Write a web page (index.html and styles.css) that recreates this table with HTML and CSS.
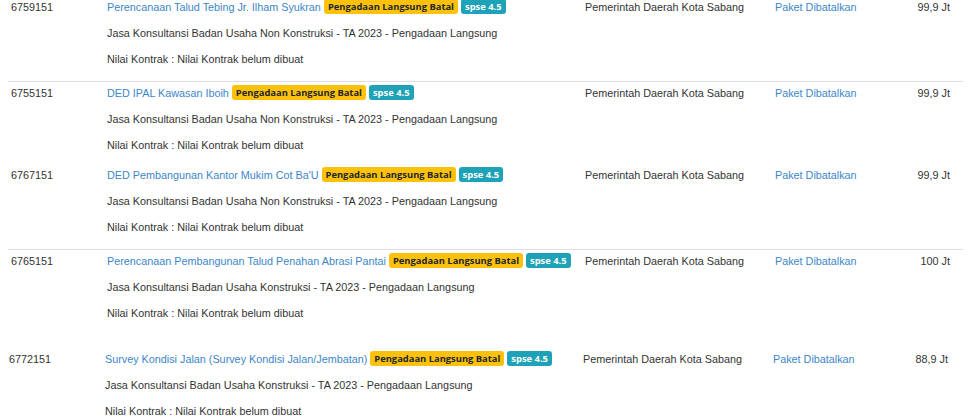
FILE: index.html
```html
<!DOCTYPE html>
<html>
<head>
<meta charset="utf-8">
<link rel="stylesheet" href="styles.css">
</head>
<body>
<div class="list">
  <div class="row row-first row-border">
    <div class="cell"><div class="line">6759151</div></div>
    <div class="cell main">
      <div class="line title"><a class="link">Perencanaan Talud Tebing Jr. Ilham Syukran</a> <span class="badge warn">Pengadaan Langsung Batal</span> <span class="badge info">spse 4.5</span></div>
      <div class="line">Jasa Konsultansi Badan Usaha Non Konstruksi - TA 2023 - Pengadaan Langsung</div>
      <div class="line">Nilai Kontrak : Nilai Kontrak belum dibuat</div>
    </div>
    <div class="cell"><div class="line">Pemerintah Daerah Kota Sabang</div></div>
    <div class="cell"><div class="line"><a class="link">Paket Dibatalkan</a></div></div>
    <div class="cell value"><div class="line">99,9 Jt</div></div>
  </div>

  <div class="row row-short">
    <div class="cell"><div class="line">6755151</div></div>
    <div class="cell main">
      <div class="line title"><a class="link">DED IPAL Kawasan Iboih</a> <span class="badge warn">Pengadaan Langsung Batal</span> <span class="badge info">spse 4.5</span></div>
      <div class="line">Jasa Konsultansi Badan Usaha Non Konstruksi - TA 2023 - Pengadaan Langsung</div>
      <div class="line">Nilai Kontrak : Nilai Kontrak belum dibuat</div>
    </div>
    <div class="cell"><div class="line">Pemerintah Daerah Kota Sabang</div></div>
    <div class="cell"><div class="line"><a class="link">Paket Dibatalkan</a></div></div>
    <div class="cell value"><div class="line">99,9 Jt</div></div>
  </div>

  <div class="row row-border">
    <div class="cell"><div class="line">6767151</div></div>
    <div class="cell main">
      <div class="line title"><a class="link">DED Pembangunan Kantor Mukim Cot Ba'U</a> <span class="badge warn">Pengadaan Langsung Batal</span> <span class="badge info">spse 4.5</span></div>
      <div class="line">Jasa Konsultansi Badan Usaha Non Konstruksi - TA 2023 - Pengadaan Langsung</div>
      <div class="line">Nilai Kontrak : Nilai Kontrak belum dibuat</div>
    </div>
    <div class="cell"><div class="line">Pemerintah Daerah Kota Sabang</div></div>
    <div class="cell"><div class="line"><a class="link">Paket Dibatalkan</a></div></div>
    <div class="cell value"><div class="line">99,9 Jt</div></div>
  </div>

  <div class="row row-tall">
    <div class="cell"><div class="line">6765151</div></div>
    <div class="cell main">
      <div class="line title"><a class="link">Perencanaan Pembangunan Talud Penahan Abrasi Pantai</a> <span class="badge warn">Pengadaan Langsung Batal</span> <span class="badge info">spse 4.5</span></div>
      <div class="line">Jasa Konsultansi Badan Usaha Konstruksi - TA 2023 - Pengadaan Langsung</div>
      <div class="line">Nilai Kontrak : Nilai Kontrak belum dibuat</div>
    </div>
    <div class="cell"><div class="line">Pemerintah Daerah Kota Sabang</div></div>
    <div class="cell"><div class="line"><a class="link">Paket Dibatalkan</a></div></div>
    <div class="cell value"><div class="line">100 Jt</div></div>
  </div>

  <div class="row row-shift">
    <div class="cell"><div class="line">6772151</div></div>
    <div class="cell main">
      <div class="line title"><a class="link">Survey Kondisi Jalan (Survey Kondisi Jalan/Jembatan)</a> <span class="badge warn">Pengadaan Langsung Batal</span> <span class="badge info">spse 4.5</span></div>
      <div class="line">Jasa Konsultansi Badan Usaha Konstruksi - TA 2023 - Pengadaan Langsung</div>
      <div class="line">Nilai Kontrak : Nilai Kontrak belum dibuat</div>
    </div>
    <div class="cell"><div class="line">Pemerintah Daerah Kota Sabang</div></div>
    <div class="cell"><div class="line"><a class="link">Paket Dibatalkan</a></div></div>
    <div class="cell value"><div class="line">88,9 Jt</div></div>
  </div>
</div>
</body>
</html>
```

FILE: styles.css
```css
html, body {
  margin: 0;
  padding: 0;
  background: #fff;
  overflow: hidden;
}
body {
  padding: 0 5px 0 8px;
  font-family: "Liberation Sans", Arial, sans-serif;
  font-size: 10.8px;
  color: #333;
}
.list {
  display: flex;
  flex-direction: column;
}
.row {
  display: grid;
  grid-template-columns: 96px 478px 190px 1fr 90px;
  padding: 2px 0 12px;
}
.row-first { margin-top: -5px; }
.row-border { border-bottom: 1px solid #dedede; }
.row-short { padding-top: 1px; padding-bottom: 8px; }
.row-tall { padding-top: 1px; padding-bottom: 24px; }
.row-shift { margin-left: -2px; margin-right: 2px; }
.cell {
  padding-left: 3px;
}
.cell.value {
  padding: 0 13px 0 0;
  text-align: right;
}
.line {
  height: 20px;
  line-height: 20px;
  white-space: nowrap;
}
.main .line + .line { margin-top: 6px; }
.link {
  color: #3c86c8;
  text-decoration: none;
}
.badge {
  display: inline-block;
  font-family: "Open Sans", sans-serif;
  font-weight: 700;
  font-size: 9.4px;
  line-height: 15px;
  padding: 0 4px;
  border-radius: 3px;
  vertical-align: 1px;
}
.badge.warn {
  background: #fcc20b;
  color: #212529;
}
.badge.info {
  background: #1da2b8;
  color: #fff;
}
```
